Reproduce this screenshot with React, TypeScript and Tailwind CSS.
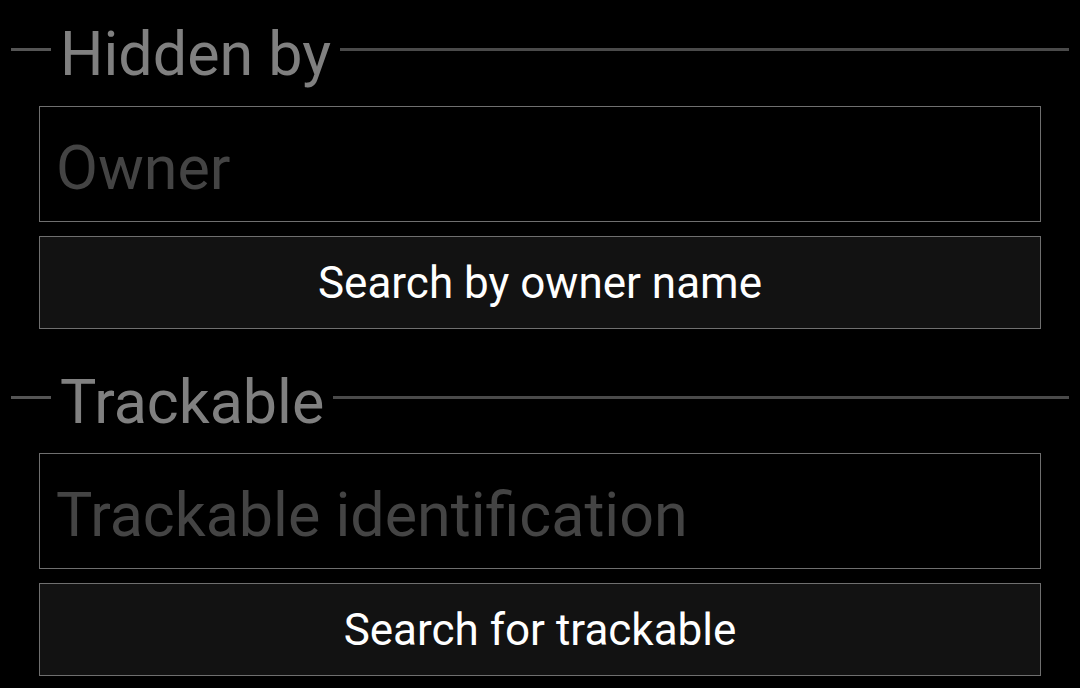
import React, { useState } from 'react';

const SectionHeader: React.FC<{ title: string }> = ({ title }) => (
  <div className="flex items-start pl-[11px] pr-[11px]">
    <div className="w-[40px] h-[3px] mt-[24px] bg-[#555555]" />
    <span className="pl-[9px] pr-[9px] text-[61px] leading-none text-[#808080]">{title}</span>
    <div className="flex-1 h-[3px] mt-[24px] bg-[#4a4a4a]" />
  </div>
);

const App: React.FC = () => {
  const [owner, setOwner] = useState('');
  const [trackable, setTrackable] = useState('');

  return (
    <div className="w-full h-[688px] bg-black overflow-hidden font-['Roboto',sans-serif]">
      <div className="pt-[24px]">
        <SectionHeader title="Hidden by" />
        <div className="px-[39px] pt-[21px] flex flex-col gap-[14px]">
          <input
            value={owner}
            onChange={(e) => setOwner(e.target.value)}
            placeholder="Owner"
            className="w-full h-[116px] pt-[8px] px-[16px] bg-black border border-[#6f6f6f] text-[61px] text-white placeholder:text-[#444444] outline-none"
          />
          <button className="w-full h-[93px] bg-[#121212] border border-[#6f6f6f] text-[44px] text-white">
            Search by owner name
          </button>
        </div>
      </div>

      <div className="pt-[43px]">
        <SectionHeader title="Trackable" />
        <div className="px-[39px] pt-[20px] flex flex-col gap-[14px]">
          <input
            value={trackable}
            onChange={(e) => setTrackable(e.target.value)}
            placeholder="Trackable identification"
            className="w-full h-[116px] pt-[8px] px-[16px] bg-black border border-[#6f6f6f] text-[61px] text-white placeholder:text-[#444444] outline-none"
          />
          <button className="w-full h-[93px] bg-[#121212] border border-[#6f6f6f] text-[44px] text-white">
            Search for trackable
          </button>
        </div>
      </div>
    </div>
  );
};

export default App;
